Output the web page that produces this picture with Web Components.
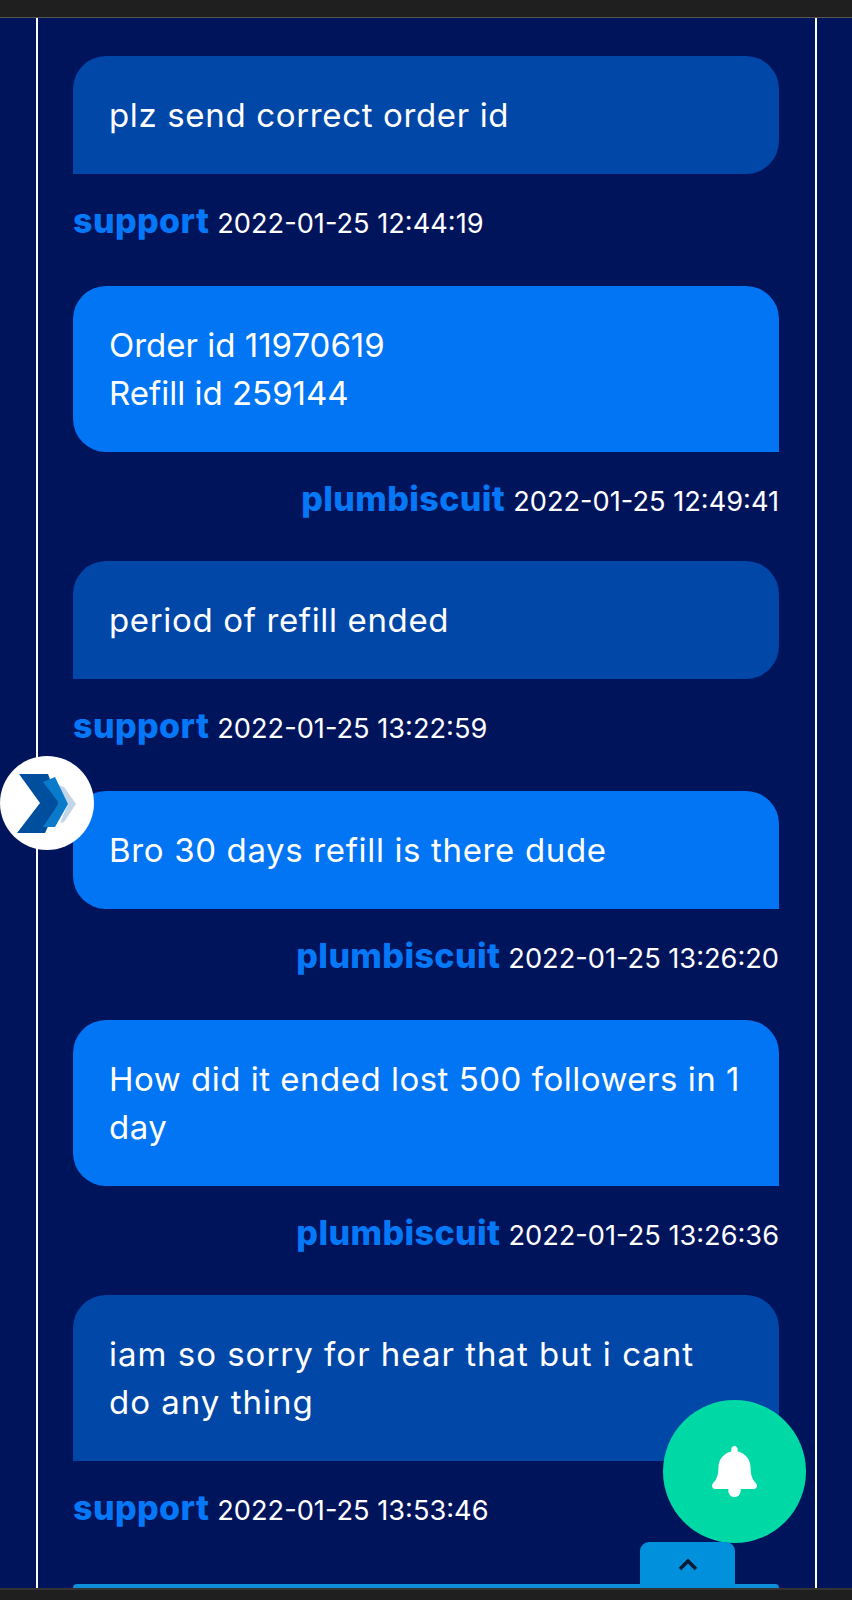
<!DOCTYPE html>
<html>
<head>
<meta charset="utf-8">
<title>Ticket</title>
<style>
  html,body{ margin:0; padding:0; background:#00145c; }
  body{ font-family:"Inter","Liberation Sans",sans-serif; color:#fff; }
</style>
</head>
<body>
<template id="t-msg">
  <style>
    :host{ display:block; margin-bottom:var(--gap,42px); }
    :host([from="user"]){ --gap:39px; }
    .bubble{
      padding:35px 36px;
      font-size:33px;
      line-height:48px;
      letter-spacing:var(--ls,.65px);
      white-space:nowrap;
      color:#fff;
      border-radius:33px 33px 33px 0;
      background:#0047a8;
    }
    :host([from="user"]) .bubble{ background:#0275f5; border-radius:33px 33px 0 33px; }
    .meta{
      margin-top:25px;
      height:45px;
      display:flex; align-items:baseline; gap:8px;
      line-height:44px;
      white-space:nowrap;
    }
    :host([from="user"]) .meta{ justify-content:flex-end; }
    .name{ font-size:34px; font-weight:800; color:#0578f8; letter-spacing:.4px; }
    .date{ font-size:27.2px; color:#fff; }
  </style>
  <div class="bubble"><slot></slot></div>
  <div class="meta"><span class="name"></span><span class="date"></span></div>
</template>

<template id="t-toggle">
  <style>
    :host{ position:absolute; left:0; top:756px; width:94px; height:94px; display:block; }
    svg{ display:block; }
  </style>
  <svg width="94" height="94" viewBox="0 0 94 94">
    <circle cx="47" cy="47" r="47" fill="#fff"/>
    <polygon points="58,29 64,31 76,48 64,66 60,67 68,48" fill="#c3d6e8"/>
    <polygon points="19,18 48,18 59,47 45,77 17,77 40,47" fill="#004f9f"/>
    <polygon points="43,26 55,21 68,48 55,71 43,71 59,47" fill="#0a7acb"/>
  </svg>
</template>

<template id="t-bell">
  <style>
    :host{ position:absolute; left:663px; top:1400px; width:143px; height:143px; border-radius:50%;
      background:#00d9a6; display:flex; align-items:center; justify-content:center; }
    svg{ display:block; margin-top:-1px; }
  </style>
  <svg width="45" height="51" viewBox="0 0 448 494" preserveAspectRatio="none">
    <path fill="#fff" d="M439.39 362.29c-19.32-20.76-55.47-51.99-55.47-154.29 0-77.7-54.48-139.9-127.94-155.16V32c0-17.67-14.32-32-31.98-32s-31.98 14.33-31.98 32v20.84C118.56 68.1 64.08 130.3 64.08 208c0 102.3-36.15 133.53-55.47 154.29-6 6.45-8.66 14.16-8.61 21.71.11 16.4 12.98 32 32.1 32h383.8c19.12 0 32-15.6 32.1-32 .05-7.55-2.61-15.27-8.61-21.71z"/>
    <circle cx="224" cy="432" r="62" fill="#fff"/>
  </svg>
</template>

<template id="t-up">
  <style>
    :host{ position:absolute; left:640px; top:1542px; width:95px; height:46px; display:flex; justify-content:center;
      background:#0090dc; border-radius:9px 9px 0 0; }
    svg{ display:block; margin-top:16px; }
  </style>
  <svg width="20" height="13" viewBox="0 0 20 13"><path d="M2 11 L10 3 L18 11" fill="none" stroke="#0a1a30" stroke-width="3.4"/></svg>
</template>

<template id="t-page">
  <style>
    :host{ display:grid; grid-template-rows:18px 1570px 12px; height:1600px; width:852px; position:relative; overflow:hidden; background:#00145c; }
    .bar{ background:#1f1f1f; }
    .bar.top{ border-bottom:1px solid #555; box-sizing:border-box; }
    .bar.bottom{ border-top:2px solid #333; box-sizing:border-box; }
    main{ margin:0 35px 0 36px; border:solid #fff; border-width:0 2px; padding:38px 36px 0 35px; overflow:hidden; display:flex; flex-direction:column; position:relative; }
    .list{ flex:none; }
    .strip{ flex:none; height:4px; margin-top:11px; background:#0d8fdc; border-radius:4px 4px 0 0; }
  </style>
  <div class="bar top"></div>
  <main>
    <div class="list"><slot></slot></div>
    <div class="strip"></div>
  </main>
  <div class="bar bottom"></div>
  <side-toggle></side-toggle>
  <notify-bell></notify-bell>
  <scroll-up></scroll-up>
</template>

<ticket-page>
  <chat-msg from="support" name="support" date="2022-01-25 12:44:19">plz send correct order id</chat-msg>
  <chat-msg from="user" name="plumbiscuit" date="2022-01-25 12:49:41" style="--ls:0px">Order id 11970619<br>Refill id 259144</chat-msg>
  <chat-msg from="support" name="support" date="2022-01-25 13:22:59">period of refill ended</chat-msg>
  <chat-msg from="user" name="plumbiscuit" date="2022-01-25 13:26:20" style="--gap:41px">Bro 30 days refill is there dude</chat-msg>
  <chat-msg from="user" name="plumbiscuit" date="2022-01-25 13:26:36" style="--ls:.5px">How did it ended lost 500 followers in 1<br>day</chat-msg>
  <chat-msg from="support" name="support" date="2022-01-25 13:53:46" style="--ls:1px">iam so sorry for hear that but i cant<br>do any thing</chat-msg>
</ticket-page>

<script>
function plain(tag, tpl){
  customElements.define(tag, class extends HTMLElement{
    constructor(){
      super();
      this.attachShadow({mode:"open"}).appendChild(document.getElementById(tpl).content.cloneNode(true));
    }
  });
}
plain("side-toggle","t-toggle");
plain("notify-bell","t-bell");
plain("scroll-up","t-up");
plain("ticket-page","t-page");

class ChatMsg extends HTMLElement{
  constructor(){
    super();
    this.attachShadow({mode:"open"}).appendChild(document.getElementById("t-msg").content.cloneNode(true));
  }
  connectedCallback(){
    this.shadowRoot.querySelector(".name").textContent = this.getAttribute("name")||"";
    this.shadowRoot.querySelector(".date").textContent = this.getAttribute("date")||"";
  }
}
customElements.define("chat-msg", ChatMsg);
</script>
</body>
</html>
